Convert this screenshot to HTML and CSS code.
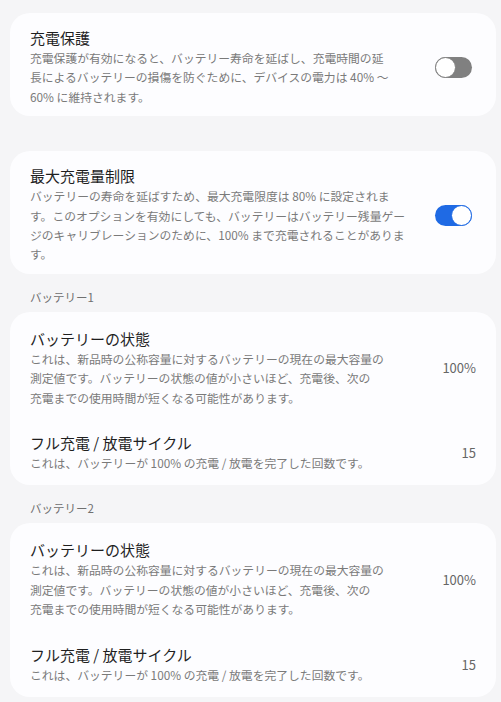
FILE: index.html
```html
<!DOCTYPE html>
<html lang="ja">
<head>
<meta charset="utf-8">
<link rel="stylesheet" href="styles.css">
</head>
<body>
<div class="page">
  <div class="card toggle-card first">
    <div class="row">
      <div class="text">
        <div class="title">充電保護</div>
        <div class="desc">充電保護が有効になると、バッテリー寿命を延ばし、充電時間の延<br>長によるバッテリーの損傷を防ぐために、デバイスの電力は 40% ～<br>60% に維持されます。</div>
      </div>
      <span class="toggle off"></span>
    </div>
  </div>

  <div class="card toggle-card">
    <div class="row">
      <div class="text">
        <div class="title">最大充電量制限</div>
        <div class="desc">バッテリーの寿命を延ばすため、最大充電限度は 80% に設定されま<br>す。このオプションを有効にしても、バッテリーはバッテリー残量ゲー<br>ジのキャリブレーションのために、100% まで充電されることがありま<br>す。</div>
      </div>
      <span class="toggle on"></span>
    </div>
  </div>

  <div class="section-label">バッテリー1</div>
  <div class="card info-card">
    <div class="row info-row">
      <div class="text">
        <div class="title">バッテリーの状態</div>
        <div class="desc">これは、新品時の公称容量に対するバッテリーの現在の最大容量の<br>測定値です。バッテリーの状態の値が小さいほど、充電後、次の<br>充電までの使用時間が短くなる可能性があります。</div>
      </div>
      <span class="value">100%</span>
    </div>
    <div class="row info-row">
      <div class="text">
        <div class="title">フル充電 / 放電サイクル</div>
        <div class="desc">これは、バッテリーが 100% の充電 / 放電を完了した回数です。</div>
      </div>
      <span class="value">15</span>
    </div>
  </div>

  <div class="section-label">バッテリー2</div>
  <div class="card info-card">
    <div class="row info-row">
      <div class="text">
        <div class="title">バッテリーの状態</div>
        <div class="desc">これは、新品時の公称容量に対するバッテリーの現在の最大容量の<br>測定値です。バッテリーの状態の値が小さいほど、充電後、次の<br>充電までの使用時間が短くなる可能性があります。</div>
      </div>
      <span class="value">100%</span>
    </div>
    <div class="row info-row">
      <div class="text">
        <div class="title">フル充電 / 放電サイクル</div>
        <div class="desc">これは、バッテリーが 100% の充電 / 放電を完了した回数です。</div>
      </div>
      <span class="value">15</span>
    </div>
  </div>
</div>
</body>
</html>
```

FILE: styles.css
```css
html, body {
  margin: 0;
  padding: 0;
  background: #f5f5f7;
}

body {
  font-family: "Noto Sans CJK JP", "Noto Sans", sans-serif;
  color: #1f1f1f;
}

.page {
  padding: 13px 5px 0 10px;
}

.card {
  background: #fdfdff;
  border-radius: 20px;
  padding: 0 20px;
}

.toggle-card {
  padding-top: 15px;
  padding-bottom: 10px;
}

.toggle-card.first {
  margin-bottom: 35px;
}

.info-card {
  padding-top: 4px;
}

.row {
  display: flex;
  align-items: center;
  justify-content: space-between;
}

.info-row {
  padding: 13px 0 13px;
}

.text {
  flex: 1;
  min-width: 0;
}

.title {
  font-size: 15px;
  line-height: 20px;
  color: #1f1f1f;
  white-space: nowrap;
}

.desc {
  font-size: 11.8px;
  line-height: 19.4px;
  color: #7a7a7a;
  white-space: nowrap;
}

.section-label {
  padding: 15px 20px 6px;
  font-size: 11.5px;
  line-height: 17px;
  color: #707070;
}

.value {
  font-size: 13px;
  color: #666;
  flex-shrink: 0;
}

.toggle {
  position: relative;
  flex-shrink: 0;
  width: 37px;
  height: 21px;
  border-radius: 11px;
  margin-right: 4px;
  box-sizing: border-box;
}

.toggle::after {
  content: "";
  position: absolute;
  top: 0;
  width: 21px;
  height: 21px;
  box-sizing: border-box;
  border-radius: 50%;
  background: #fff;
}

.toggle.off {
  background: #808080;
}

.toggle.off::after {
  left: 0;
  border: 1.5px solid #808080;
}

.toggle.on {
  background: #1f6ae4;
}

.toggle.on::after {
  right: 0;
  border: 1.5px solid #1f6ae4;
}
```
